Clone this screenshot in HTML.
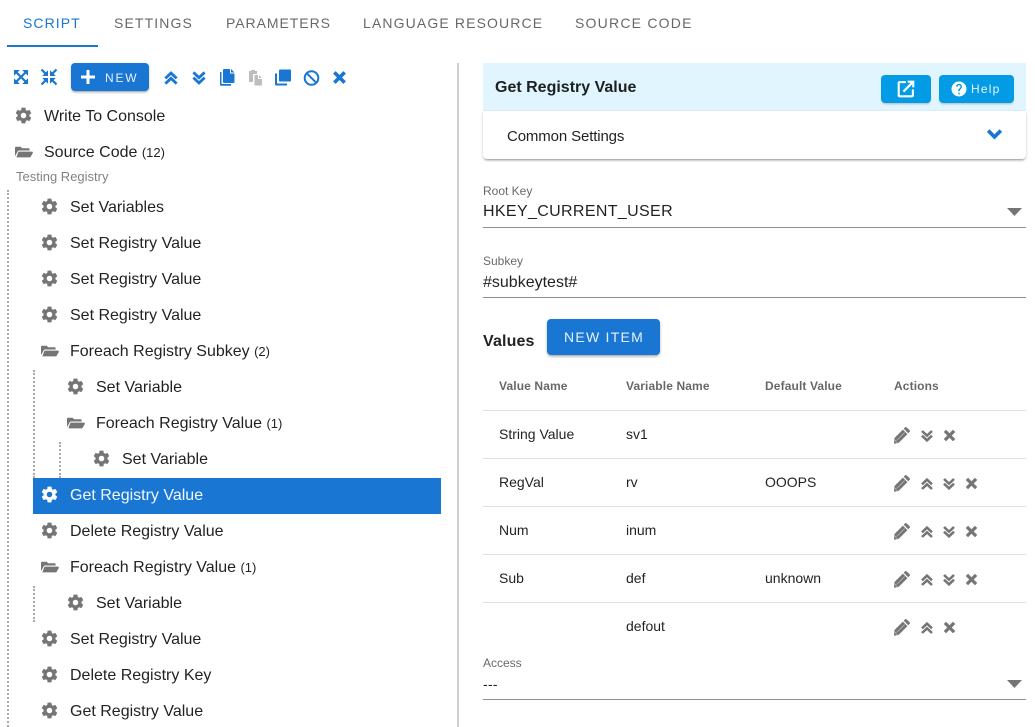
<!DOCTYPE html>
<html><head><meta charset="utf-8"><style>
html,body{margin:0;padding:0;background:#fff}
body{position:relative;width:1035px;height:727px;overflow:hidden;font-family:"Liberation Sans",sans-serif;color:rgba(0,0,0,.87)}
.a,svg.i,.t{position:absolute}
.t{white-space:nowrap;line-height:20px;font-size:16px;height:20px}
.tab{font-size:14px;letter-spacing:1.13px;color:rgba(0,0,0,.6);top:13px}
.g{fill:#757575}
.m{font-size:14px}
.h{font-size:12px;font-weight:bold;color:rgba(0,0,0,.6);top:376px;letter-spacing:.12px}
.l{font-size:12px;color:rgba(0,0,0,.6)}
.line{position:absolute;left:483px;width:543px;height:1px;background:#e0e0e0}
.dot{position:absolute;width:0;border-left:2px dotted #aaa}
svg.i{width:24px;height:24px}
svg.k{width:19px;height:19px;margin:-1.5px 0 0 -1px}
.s{font-size:13px}
</style></head><body>
<svg width="0" height="0" style="position:absolute"><defs>
<symbol id="cog" viewBox="0 0 24 24"><path d="M12,15.5A3.5,3.5 0 0,1 8.5,12A3.5,3.5 0 0,1 12,8.5A3.5,3.5 0 0,1 15.5,12A3.5,3.5 0 0,1 12,15.5M19.43,12.97C19.47,12.65 19.5,12.33 19.5,12C19.5,11.67 19.47,11.34 19.43,11L21.54,9.37C21.73,9.22 21.78,8.95 21.66,8.73L19.66,5.27C19.54,5.05 19.27,4.96 19.05,5.05L16.56,6.05C16.04,5.66 15.5,5.32 14.87,5.07L14.5,2.42C14.46,2.18 14.25,2 14,2H10C9.75,2 9.54,2.18 9.5,2.42L9.13,5.07C8.5,5.32 7.96,5.66 7.44,6.05L4.95,5.05C4.73,4.96 4.46,5.05 4.34,5.27L2.34,8.73C2.21,8.95 2.27,9.22 2.46,9.37L4.57,11C4.53,11.34 4.5,11.67 4.5,12C4.5,12.33 4.53,12.65 4.57,12.97L2.46,14.63C2.27,14.78 2.21,15.05 2.34,15.27L4.34,18.73C4.46,18.95 4.73,19.03 4.95,18.95L7.44,17.94C7.96,18.34 8.5,18.68 9.13,18.93L9.5,21.58C9.54,21.82 9.75,22 10,22H14C14.25,22 14.46,21.82 14.5,21.58L14.87,18.93C15.5,18.67 16.04,18.34 16.56,17.94L19.05,18.95C19.27,19.03 19.54,18.95 19.66,18.73L21.66,15.27C21.78,15.05 21.73,14.78 21.54,14.63L19.43,12.97Z"/></symbol>
<symbol id="fold" viewBox="0 0 24 24"><path d="M0,6.5A1.5,1.5 0 0,1 1.5,5H7.5L9.5,7H18A1.5,1.5 0 0,1 19.5,8.5V10H5.5C4.6,10 3.9,10.5 3.5,11.3L0.3,17.2C0.1,16.9 0,16.6 0,16.3V6.5ZM5.6,11.5H22.6C23.6,11.5 24.2,12.5 23.7,13.4L21,18.2C20.6,18.8 20,19.2 19.3,19.2H1.9L4.3,12.3C4.6,11.8 5,11.5 5.6,11.5Z"/></symbol>
<symbol id="up" viewBox="0 0 24 24"><path fill="none" stroke="currentColor" stroke-width="3.8" d="M4.5,12.5L12,5.5L19.5,12.5M4.5,19.5L12,12.5L19.5,19.5"/></symbol>
<symbol id="down" viewBox="0 0 24 24"><path fill="none" stroke="currentColor" stroke-width="3.8" d="M4.5,4.5L12,11.5L19.5,4.5M4.5,11.5L12,18.5L19.5,11.5"/></symbol>
<symbol id="x" viewBox="0 0 24 24"><path fill="none" stroke="currentColor" stroke-width="4.6" d="M5.5,5.5L18.5,18.5M18.5,5.5L5.5,18.5"/></symbol>
<symbol id="pen" viewBox="0 0 24 24"><path d="M18.2,1.8L22.2,5.8C22.9,6.5 22.9,7.2 22.2,7.9L20.4,9.7L14.3,3.6L16.1,1.8C16.8,1.1 17.5,1.1 18.2,1.8ZM13.2,4.8L19.2,10.8L7.5,22.5L1.2,23.6L2,16Z"/><path d="M5,19.2L15.6,8.6" stroke="#fff" stroke-width=".9" opacity=".55"/><path d="M2,18.5L6,22.5" stroke="#fff" stroke-width=".9" opacity=".55"/></symbol>
</defs></svg>

<!-- tabs -->
<div class="t tab" style="left:23px;color:#1976d2;letter-spacing:1.08px">SCRIPT</div>
<div class="t tab" style="left:114px;letter-spacing:1.12px">SETTINGS</div>
<div class="t tab" style="left:226px;letter-spacing:.95px">PARAMETERS</div>
<div class="t tab" style="left:363px">LANGUAGE RESOURCE</div>
<div class="t tab" style="left:575px;letter-spacing:1.22px">SOURCE CODE</div>
<div class="a" style="left:7px;top:45px;width:91px;height:2px;background:#1976d2"></div>

<!-- toolbar -->
<svg class="i" style="left:11px;top:67px;width:20px;height:20px" viewBox="0 0 20 20"><path fill="#1976d2" d="M3,3H8.8L3,8.8ZM17,3V8.8L11.2,3ZM3,17V11.2L8.8,17ZM17,17H11.2L17,11.2Z"/><path fill="none" stroke="#1976d2" stroke-width="2.2" d="M4.5,4.5L15.5,15.5M15.5,4.5L4.5,15.5"/></svg>
<svg class="i" style="left:39px;top:67px;width:20px;height:20px" viewBox="0 0 20 20"><path fill="#1976d2" d="M9,9H3.2L9,3.2ZM11,9V3.2L16.8,9ZM9,11V16.8L3.2,11ZM11,11H16.8L11,16.8Z"/><path fill="none" stroke="#1976d2" stroke-width="2.2" d="M2.5,2.5L6.5,6.5M17.5,2.5L13.5,6.5M2.5,17.5L6.5,13.5M17.5,17.5L13.5,13.5"/></svg>
<div class="a" style="left:71px;top:63px;width:78px;height:28px;background:#1976d2;border-radius:4px;box-shadow:0 2px 2px -1px rgba(0,0,0,.3),0 1px 3px rgba(0,0,0,.15)"></div>
<svg class="i" style="left:76px;top:65px"><path fill="#fff" d="M19,13.5H13.5V19H10.5V13.5H5V10.5H10.5V5H13.5V10.5H19Z"/></svg>
<div class="t" style="left:105px;top:68px;font-size:12px;letter-spacing:1.8px;color:#fff;opacity:.9">NEW</div>
<svg class="i" style="left:162px;top:69px;width:18px;height:18px;color:#1976d2"><use href="#up"/></svg>
<svg class="i" style="left:190px;top:69px;width:18px;height:18px;color:#1976d2"><use href="#down"/></svg>
<svg class="i" style="left:218px;top:67px;width:20px;height:20px" viewBox="0 0 20 20"><path fill="#1976d2" d="M6,2H12V6.5H16.5V15C16.5,15.6 16,16 15.5,16H6C5.5,16 5,15.6 5,15V3C5,2.4 5.5,2 6,2ZM13,2L16.5,5.5H13ZM2,5H3.5V17H13V18.7H3C2.4,18.7 2,18.3 2,17.7Z"/></svg>
<svg class="i" style="left:246px;top:67px;width:20px;height:20px" viewBox="0 0 20 20"><path fill="#bdbdbd" d="M3,4H5V3H9V4H11V7H8C7.4,7 7,7.4 7,8V15H3ZM8.5,8H12V12H16V18.5H8.5ZM13,8L16,11H13Z"/></svg>
<svg class="i" style="left:273px;top:67px;width:20px;height:20px" viewBox="0 0 20 20"><path fill="#1976d2" d="M7,2.5H17A1,1 0 0,1 18,3.5V13.5A1,1 0 0,1 17,14.5H7A1,1 0 0,1 6,13.5V3.5A1,1 0 0,1 7,2.5ZM2,6.5H4V16.5H14V18.5H3A1,1 0 0,1 2,17.5Z"/></svg>
<svg class="i" style="left:300.5px;top:67.5px;width:20px;height:20px" viewBox="0 0 20 20"><circle cx="10.5" cy="10" r="6.8" fill="none" stroke="#1976d2" stroke-width="2"/><path d="M5.8,5.3L15.2,14.7" stroke="#1976d2" stroke-width="2"/></svg>
<svg class="i" style="left:330px;top:68px;width:19px;height:19px;color:#1976d2"><use href="#x"/></svg>

<!-- tree -->
<div class="dot" style="left:7px;top:190px;height:537px"></div>
<div class="dot" style="left:33px;top:370px;height:108px"></div>
<div class="dot" style="left:59px;top:442px;height:36px"></div>
<div class="dot" style="left:33px;top:586px;height:36px"></div>
<div class="a" style="left:457px;top:63px;width:2px;height:664px;background:#d0d0d0"></div>
<div class="a" style="left:33px;top:478px;width:408px;height:36px;background:#1976d2"></div>

<svg class="i k g" style="left:15px;top:107px"><use href="#cog"/></svg><div class="t" style="left:44px;top:107px">Write To Console</div>
<svg class="i g" style="left:15px;top:142.5px;width:18px;height:18px"><use href="#fold"/></svg><div class="t" style="left:44px;top:143px">Source Code <span class="s">(12)</span></div>
<div class="t" style="left:16px;top:167px;font-size:13px;color:rgba(0,0,0,.5)">Testing Registry</div>

<svg class="i k g" style="left:41px;top:198px"><use href="#cog"/></svg><div class="t" style="left:70px;top:198px">Set Variables</div>
<svg class="i k g" style="left:41px;top:234px"><use href="#cog"/></svg><div class="t" style="left:70px;top:234px">Set Registry Value</div>
<svg class="i k g" style="left:41px;top:270px"><use href="#cog"/></svg><div class="t" style="left:70px;top:270px">Set Registry Value</div>
<svg class="i k g" style="left:41px;top:306px"><use href="#cog"/></svg><div class="t" style="left:70px;top:306px">Set Registry Value</div>
<svg class="i g" style="left:41px;top:341.5px;width:18px;height:18px"><use href="#fold"/></svg><div class="t" style="left:70px;top:342px">Foreach Registry Subkey <span class="s">(2)</span></div>
<svg class="i k g" style="left:67px;top:378px"><use href="#cog"/></svg><div class="t" style="left:96px;top:378px">Set Variable</div>
<svg class="i g" style="left:67px;top:413.5px;width:18px;height:18px"><use href="#fold"/></svg><div class="t" style="left:96px;top:414px">Foreach Registry Value <span class="s">(1)</span></div>
<svg class="i k g" style="left:93px;top:450px"><use href="#cog"/></svg><div class="t" style="left:122px;top:450px">Set Variable</div>
<svg class="i k" style="left:41px;top:486px;fill:#fff"><use href="#cog"/></svg><div class="t" style="left:70px;top:486px;color:#fff;opacity:.95">Get Registry Value</div>
<svg class="i k g" style="left:41px;top:522px"><use href="#cog"/></svg><div class="t" style="left:70px;top:522px">Delete Registry Value</div>
<svg class="i g" style="left:41px;top:557.5px;width:18px;height:18px"><use href="#fold"/></svg><div class="t" style="left:70px;top:558px">Foreach Registry Value <span class="s">(1)</span></div>
<svg class="i k g" style="left:67px;top:594px"><use href="#cog"/></svg><div class="t" style="left:96px;top:594px">Set Variable</div>
<svg class="i k g" style="left:41px;top:630px"><use href="#cog"/></svg><div class="t" style="left:70px;top:630px">Set Registry Value</div>
<svg class="i k g" style="left:41px;top:666px"><use href="#cog"/></svg><div class="t" style="left:70px;top:666px">Delete Registry Key</div>
<svg class="i k g" style="left:41px;top:702px"><use href="#cog"/></svg><div class="t" style="left:70px;top:702px">Get Registry Value</div>

<!-- right header -->
<div class="a" style="left:483px;top:63px;width:543px;height:48px;background:#e1f5fe"></div>
<div class="t" style="left:495px;top:78px;font-weight:bold">Get Registry Value</div>
<div class="a" style="left:881px;top:75px;width:50px;height:28px;background:#039be5;border-radius:4px;box-shadow:0 2px 2px -1px rgba(0,0,0,.25)"></div>
<svg class="i" style="left:896px;top:79px;width:20px;height:20px" viewBox="0 0 24 24"><path fill="#fff" d="M14,2V4.5H17.6L8,14.1L9.9,16L19.5,6.4V10H22V2ZM19,19.5H4.5V5H12V2.5H4C2.9,2.5 2,3.4 2,4.5V20C2,21.1 2.9,22 4,22H19.5C20.6,22 21.5,21.1 21.5,20V12.5H19Z"/></svg>
<div class="a" style="left:939px;top:75px;width:75px;height:28px;background:#039be5;border-radius:4px;box-shadow:0 2px 2px -1px rgba(0,0,0,.25)"></div>
<svg class="i" style="left:950px;top:80px;width:18px;height:18px" viewBox="0 0 24 24"><path fill="#fff" d="M15.07,11.25L14.17,12.17C13.45,12.89 13,13.5 13,15H11V14.5C11,13.39 11.45,12.39 12.17,11.67L13.41,10.41C13.78,10.05 14,9.55 14,9C14,7.89 13.1,7 12,7A2,2 0 0,0 10,9H8A4,4 0 0,1 12,5A4,4 0 0,1 16,9C16,9.88 15.64,10.67 15.07,11.25M13,19H11V17H13M12,2A10,10 0 0,0 2,12A10,10 0 0,0 12,22A10,10 0 0,0 22,12C22,6.47 17.5,2 12,2Z"/></svg>
<div class="t" style="left:971px;top:79px;font-size:12px;letter-spacing:1.2px;color:#fff;opacity:.9">Help</div>

<div class="a" style="left:483px;top:111px;width:543px;height:48px;background:#fff;border-radius:0 0 4px 4px;box-shadow:0 2px 2px -1px rgba(0,0,0,.35),0 1px 3px rgba(0,0,0,.15)"></div>
<div class="t" style="left:507px;top:126px;font-size:15px;letter-spacing:-.13px;line-height:21px">Common Settings</div>
<svg class="i" style="left:985px;top:125px;width:19px;height:19px" viewBox="0 0 24 24"><path fill="none" stroke="#1976d2" stroke-width="4.6" d="M4,7L12,15L20,7"/></svg>

<!-- fields -->
<div class="t l" style="left:483px;top:181px">Root Key</div>
<div class="t" style="left:483px;top:202px;letter-spacing:.35px">HKEY_CURRENT_USER</div>
<svg class="i" style="left:1006px;top:207px;width:18px;height:10px" viewBox="0 0 18 10"><path fill="#757575" d="M1,1H16L8.5,9Z"/></svg>
<div class="a" style="left:483px;top:227px;width:543px;height:1px;background:#8f8f8f"></div>
<div class="t l" style="left:483px;top:251px">Subkey</div>
<div class="t" style="left:483px;top:273px">#subkeytest#</div>
<div class="a" style="left:483px;top:297px;width:543px;height:1px;background:#8f8f8f"></div>

<div class="t" style="left:483px;top:332px;font-weight:bold;letter-spacing:.15px">Values</div>
<div class="a" style="left:547px;top:319px;width:113px;height:36px;background:#1976d2;border-radius:4px;box-shadow:0 2px 3px -1px rgba(0,0,0,.35),0 1px 3px rgba(0,0,0,.12)"></div>
<div class="t" style="left:564px;top:327px;font-size:14px;letter-spacing:1.25px;color:#fff;opacity:.9">NEW ITEM</div>

<!-- table -->
<div class="t h" style="left:499px">Value Name</div>
<div class="t h" style="left:626px">Variable Name</div>
<div class="t h" style="left:765px">Default Value</div>
<div class="t h" style="left:894px">Actions</div>
<div class="line" style="top:410px"></div>
<div class="line" style="top:458px"></div>
<div class="line" style="top:506px"></div>
<div class="line" style="top:554px"></div>
<div class="line" style="top:602px"></div>

<div class="t m" style="left:499px;top:424px">String Value</div><div class="t m" style="left:626px;top:424px">sv1</div>
<div class="t m" style="left:499px;top:472px">RegVal</div><div class="t m" style="left:626px;top:472px">rv</div><div class="t m" style="left:765px;top:472px">OOOPS</div>
<div class="t m" style="left:499px;top:520px">Num</div><div class="t m" style="left:626px;top:520px">inum</div>
<div class="t m" style="left:499px;top:568px">Sub</div><div class="t m" style="left:626px;top:568px">def</div><div class="t m" style="left:765px;top:568px">unknown</div>
<div class="t m" style="left:626px;top:616px">defout</div>

<svg class="i g" style="left:893px;top:426px;width:18px;height:18px"><use href="#pen"/></svg>
<svg class="i" style="left:919px;top:428px;width:16px;height:16px;color:#757575"><use href="#down"/></svg>
<svg class="i" style="left:941px;top:427px;width:17px;height:17px;color:#757575"><use href="#x"/></svg>

<svg class="i g" style="left:893px;top:474px;width:18px;height:18px"><use href="#pen"/></svg>
<svg class="i" style="left:919px;top:476px;width:16px;height:16px;color:#757575"><use href="#up"/></svg>
<svg class="i" style="left:941px;top:476px;width:16px;height:16px;color:#757575"><use href="#down"/></svg>
<svg class="i" style="left:963px;top:475px;width:17px;height:17px;color:#757575"><use href="#x"/></svg>

<svg class="i g" style="left:893px;top:522px;width:18px;height:18px"><use href="#pen"/></svg>
<svg class="i" style="left:919px;top:524px;width:16px;height:16px;color:#757575"><use href="#up"/></svg>
<svg class="i" style="left:941px;top:524px;width:16px;height:16px;color:#757575"><use href="#down"/></svg>
<svg class="i" style="left:963px;top:523px;width:17px;height:17px;color:#757575"><use href="#x"/></svg>

<svg class="i g" style="left:893px;top:570px;width:18px;height:18px"><use href="#pen"/></svg>
<svg class="i" style="left:919px;top:572px;width:16px;height:16px;color:#757575"><use href="#up"/></svg>
<svg class="i" style="left:941px;top:572px;width:16px;height:16px;color:#757575"><use href="#down"/></svg>
<svg class="i" style="left:963px;top:571px;width:17px;height:17px;color:#757575"><use href="#x"/></svg>

<svg class="i g" style="left:893px;top:618px;width:18px;height:18px"><use href="#pen"/></svg>
<svg class="i" style="left:919px;top:620px;width:16px;height:16px;color:#757575"><use href="#up"/></svg>
<svg class="i" style="left:941px;top:619px;width:17px;height:17px;color:#757575"><use href="#x"/></svg>

<div class="t l" style="left:483px;top:653px">Access</div>
<div class="t" style="left:483px;top:674px;font-size:14px;letter-spacing:.3px">---</div>
<svg class="i" style="left:1006px;top:679px;width:18px;height:10px" viewBox="0 0 18 10"><path fill="#757575" d="M1,1H16L8.5,9Z"/></svg>
<div class="a" style="left:483px;top:699px;width:543px;height:1px;background:#8f8f8f"></div>
</body></html>
